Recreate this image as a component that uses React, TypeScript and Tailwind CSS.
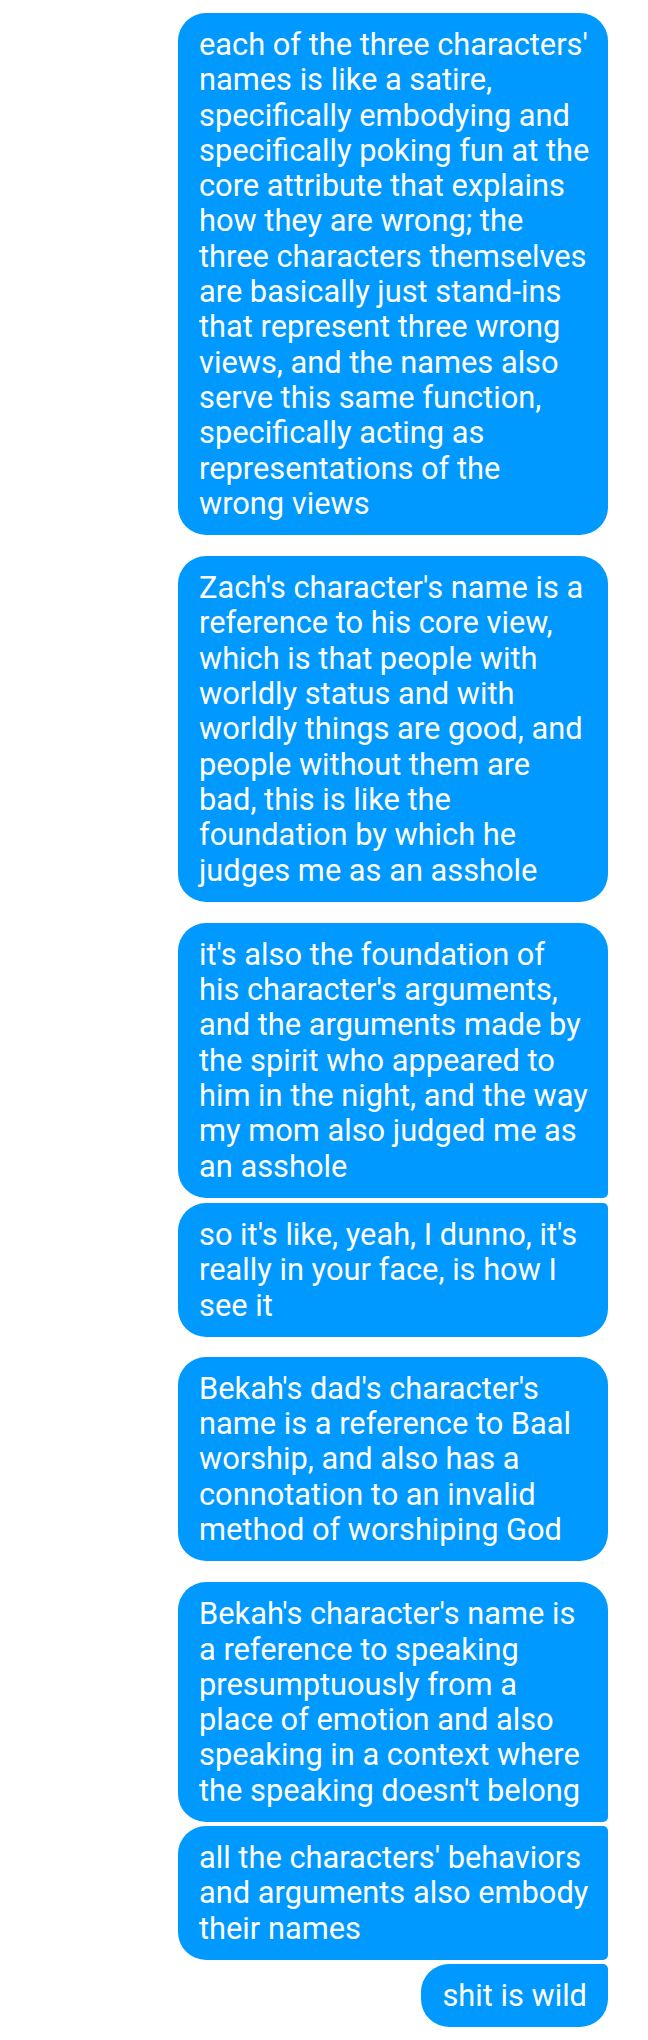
type Msg = { lines: string[]; className: string }

const bubble =
  "shrink-0 bg-[#0099ff] px-[21px] py-[14px] text-[30.8px] leading-[35.3px] text-white"

const messages: Msg[] = [
  {
    lines: [
      "each of the three characters'",
      "names is like a satire,",
      "specifically embodying and",
      "specifically poking fun at the",
      "core attribute that explains",
      "how they are wrong; the",
      "three characters themselves",
      "are basically just stand-ins",
      "that represent three wrong",
      "views, and the names also",
      "serve this same function,",
      "specifically acting as",
      "representations of the",
      "wrong views",
    ],
    className: "w-[430px] rounded-[28px]",
  },
  {
    lines: [
      "Zach's character's name is a",
      "reference to his core view,",
      "which is that people with",
      "worldly status and with",
      "worldly things are good, and",
      "people without them are",
      "bad, this is like the",
      "foundation by which he",
      "judges me as an asshole",
    ],
    className: "mt-[21px] w-[430px] rounded-[28px]",
  },
  {
    lines: [
      "it's also the foundation of",
      "his character's arguments,",
      "and the arguments made by",
      "the spirit who appeared to",
      "him in the night, and the way",
      "my mom also judged me as",
      "an asshole",
    ],
    className: "mt-[21px] w-[430px] rounded-[28px] rounded-br-[5px]",
  },
  {
    lines: ["so it's like, yeah, I dunno, it's", "really in your face, is how I", "see it"],
    className: "mt-[5px] w-[430px] rounded-[28px] rounded-tr-[5px]",
  },
  {
    lines: [
      "Bekah's dad's character's",
      "name is a reference to Baal",
      "worship, and also has a",
      "connotation to an invalid",
      "method of worshiping God",
    ],
    className: "mt-[20px] w-[430px] rounded-[28px]",
  },
  {
    lines: [
      "Bekah's character's name is",
      "a reference to speaking",
      "presumptuously from a",
      "place of emotion and also",
      "speaking in a context where",
      "the speaking doesn't belong",
    ],
    className: "mt-[21px] w-[430px] rounded-[28px] rounded-br-[5px]",
  },
  {
    lines: ["all the characters' behaviors", "and arguments also embody", "their names"],
    className: "mt-[4px] w-[430px] rounded-[28px] rounded-r-[5px]",
  },
  {
    lines: ["shit is wild"],
    className: "mt-[4px] rounded-[28px] rounded-tr-[5px]",
  },
]

export default function App() {
  return (
    <div
      className="flex min-h-[2040px] w-[648px] flex-col items-end bg-white pr-[40px] pt-[13px]"
      style={{ fontFamily: "Roboto, 'Noto Sans', sans-serif" }}
    >
      {messages.map((m, i) => (
        <div key={i} className={`${bubble} ${m.className}`}>
          {m.lines.map((l, j) => (
            <span key={j} className="block whitespace-nowrap">
              {l}
            </span>
          ))}
        </div>
      ))}
    </div>
  )
}
